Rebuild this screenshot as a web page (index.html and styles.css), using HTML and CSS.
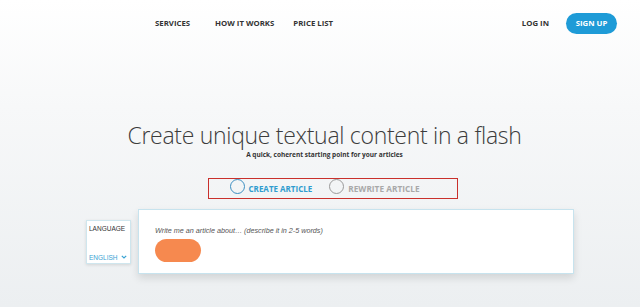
FILE: index.html
```html
<!DOCTYPE html>
<html lang="en">
<head>
<meta charset="utf-8">
<title>Article generator</title>
<link rel="stylesheet" href="styles.css">
</head>
<body>
<div class="page">
  <header class="topbar">
    <nav class="mainnav">
      <a class="navlink" href="#">SERVICES</a>
      <a class="navlink nl-how" href="#">HOW IT WORKS</a>
      <a class="navlink nl-price" href="#">PRICE LIST</a>
    </nav>
    <div class="account">
      <a class="navlink" href="#">LOG IN</a>
      <a class="signup" href="#">SIGN UP</a>
    </div>
  </header>
  <main class="hero">
    <h1 class="title">Create unique textual content in a flash</h1>
    <p class="subtitle">A quick, coherent starting point for your articles</p>
    <div class="modes">
      <label class="mode mode-active"><span class="radio"></span>CREATE ARTICLE</label>
      <label class="mode mode-off"><span class="radio"></span>REWRITE ARTICLE</label>
    </div>
    <div class="workspace">
      <div class="language">
        <span class="lang-label">LANGUAGE</span>
        <span class="lang-value">ENGLISH <svg class="chev" width="6" height="4" viewBox="0 0 6 4"><path d="M0.8 0.8 L3 3 L5.2 0.8" fill="none" stroke="#3aa3d3" stroke-width="1.2"/></svg></span>
      </div>
      <div class="card">
        <p class="prompt">Write me an article about… (describe it in 2-5 words)</p>
        <button class="go" type="button"></button>
      </div>
    </div>
  </main>
</div>
</body>
</html>
```
FILE: styles.css
```css
* { box-sizing: border-box; }
html, body { margin: 0; padding: 0; }
body {
  width: 640px;
  height: 307px;
  overflow: hidden;
  font-family: "Open Sans", "Liberation Sans", sans-serif;
  background: linear-gradient(180deg, #ffffff 0%, #f7f8f9 35%, #eceff1 100%);
}
.page { width: 640px; height: 307px; }
.topbar {
  height: 46px;
  display: flex;
  align-items: center;
  justify-content: space-between;
  padding: 0 23px 0 155px;
}
.mainnav { display: flex; align-items: center; }
.navlink {
  color: #333;
  text-decoration: none;
  font-weight: 700;
  font-size: 7.8px;
  letter-spacing: 0;
}
.nl-how { margin-left: 25px; }
.nl-price { margin-left: 19px; }
.account { display: flex; align-items: center; gap: 17px; }
.signup {
  display: flex;
  align-items: center;
  justify-content: center;
  width: 51px;
  height: 21px;
  border-radius: 11px;
  background: #1e9bd7;
  color: #fff;
  font-weight: 700;
  font-size: 7.8px;
  text-decoration: none;
}
.hero {
  display: flex;
  flex-direction: column;
  align-items: center;
  padding-top: 74px;
}
.title {
  margin: 0;
  font-family: "Open Sans", sans-serif;
  font-weight: 300;
  font-size: 23px;
  line-height: 30px;
  color: #3c3c3c;
  letter-spacing: -0.3px;
  padding-left: 9px;
}
.subtitle {
  margin: 0;
  font-size: 6.5px;
  font-weight: 700;
  color: #333;
  line-height: 10px;
  padding-left: 9px;
}
.modes {
  margin-top: 18px;
  width: 250px;
  height: 21px;
  border: 1px solid #c9302c;
  display: flex;
  align-items: center;
  padding-left: 21px;
  margin-left: 25px;
}
.mode {
  display: flex;
  align-items: center;
  font-size: 8px;
  font-weight: 700;
}
.mode-active { color: #2f9ccf; }
.mode-off { color: #a9a9a9; margin-left: 17px; font-size: 8.3px; }
.radio {
  width: 15px;
  height: 15px;
  border-radius: 50%;
  border: 1.2px solid #3d8fc2;
  margin-right: 4px;
  margin-top: -4px;
}
.mode-off .radio { border-color: #9a9a9a; }
.workspace {
  display: flex;
  align-items: center;
  margin-top: 10px;
  margin-left: 20px;
}
.language {
  width: 45px;
  height: 44px;
  background: #fff;
  border: 1px solid #cfe6ee;
  box-shadow: 0 1px 3px rgba(0,0,0,0.12);
  display: flex;
  flex-direction: column;
  justify-content: space-between;
  padding: 4px 2px 2px 2px;
  margin-right: 7px;
}
.lang-label { font-size: 6.5px; color: #333; font-family: "Liberation Sans", sans-serif; }
.lang-value { font-size: 6.5px; color: #3aa3d3; font-family: "Liberation Sans", sans-serif; display: flex; align-items: center; gap: 3px; }
.card {
  width: 436px;
  height: 65px;
  background: #fff;
  border: 1px solid #c7e3ee;
  box-shadow: 0 4px 8px rgba(0,0,0,0.12);
  padding: 16px 16px 0;
}
.prompt {
  margin: 0;
  font-family: "Liberation Sans", sans-serif;
  font-style: italic;
  font-size: 7.2px;
  color: #555;
}
.go {
  display: block;
  margin-top: 4px;
  width: 46px;
  height: 23px;
  border: none;
  border-radius: 12px;
  background: #f6894f;
}
```
